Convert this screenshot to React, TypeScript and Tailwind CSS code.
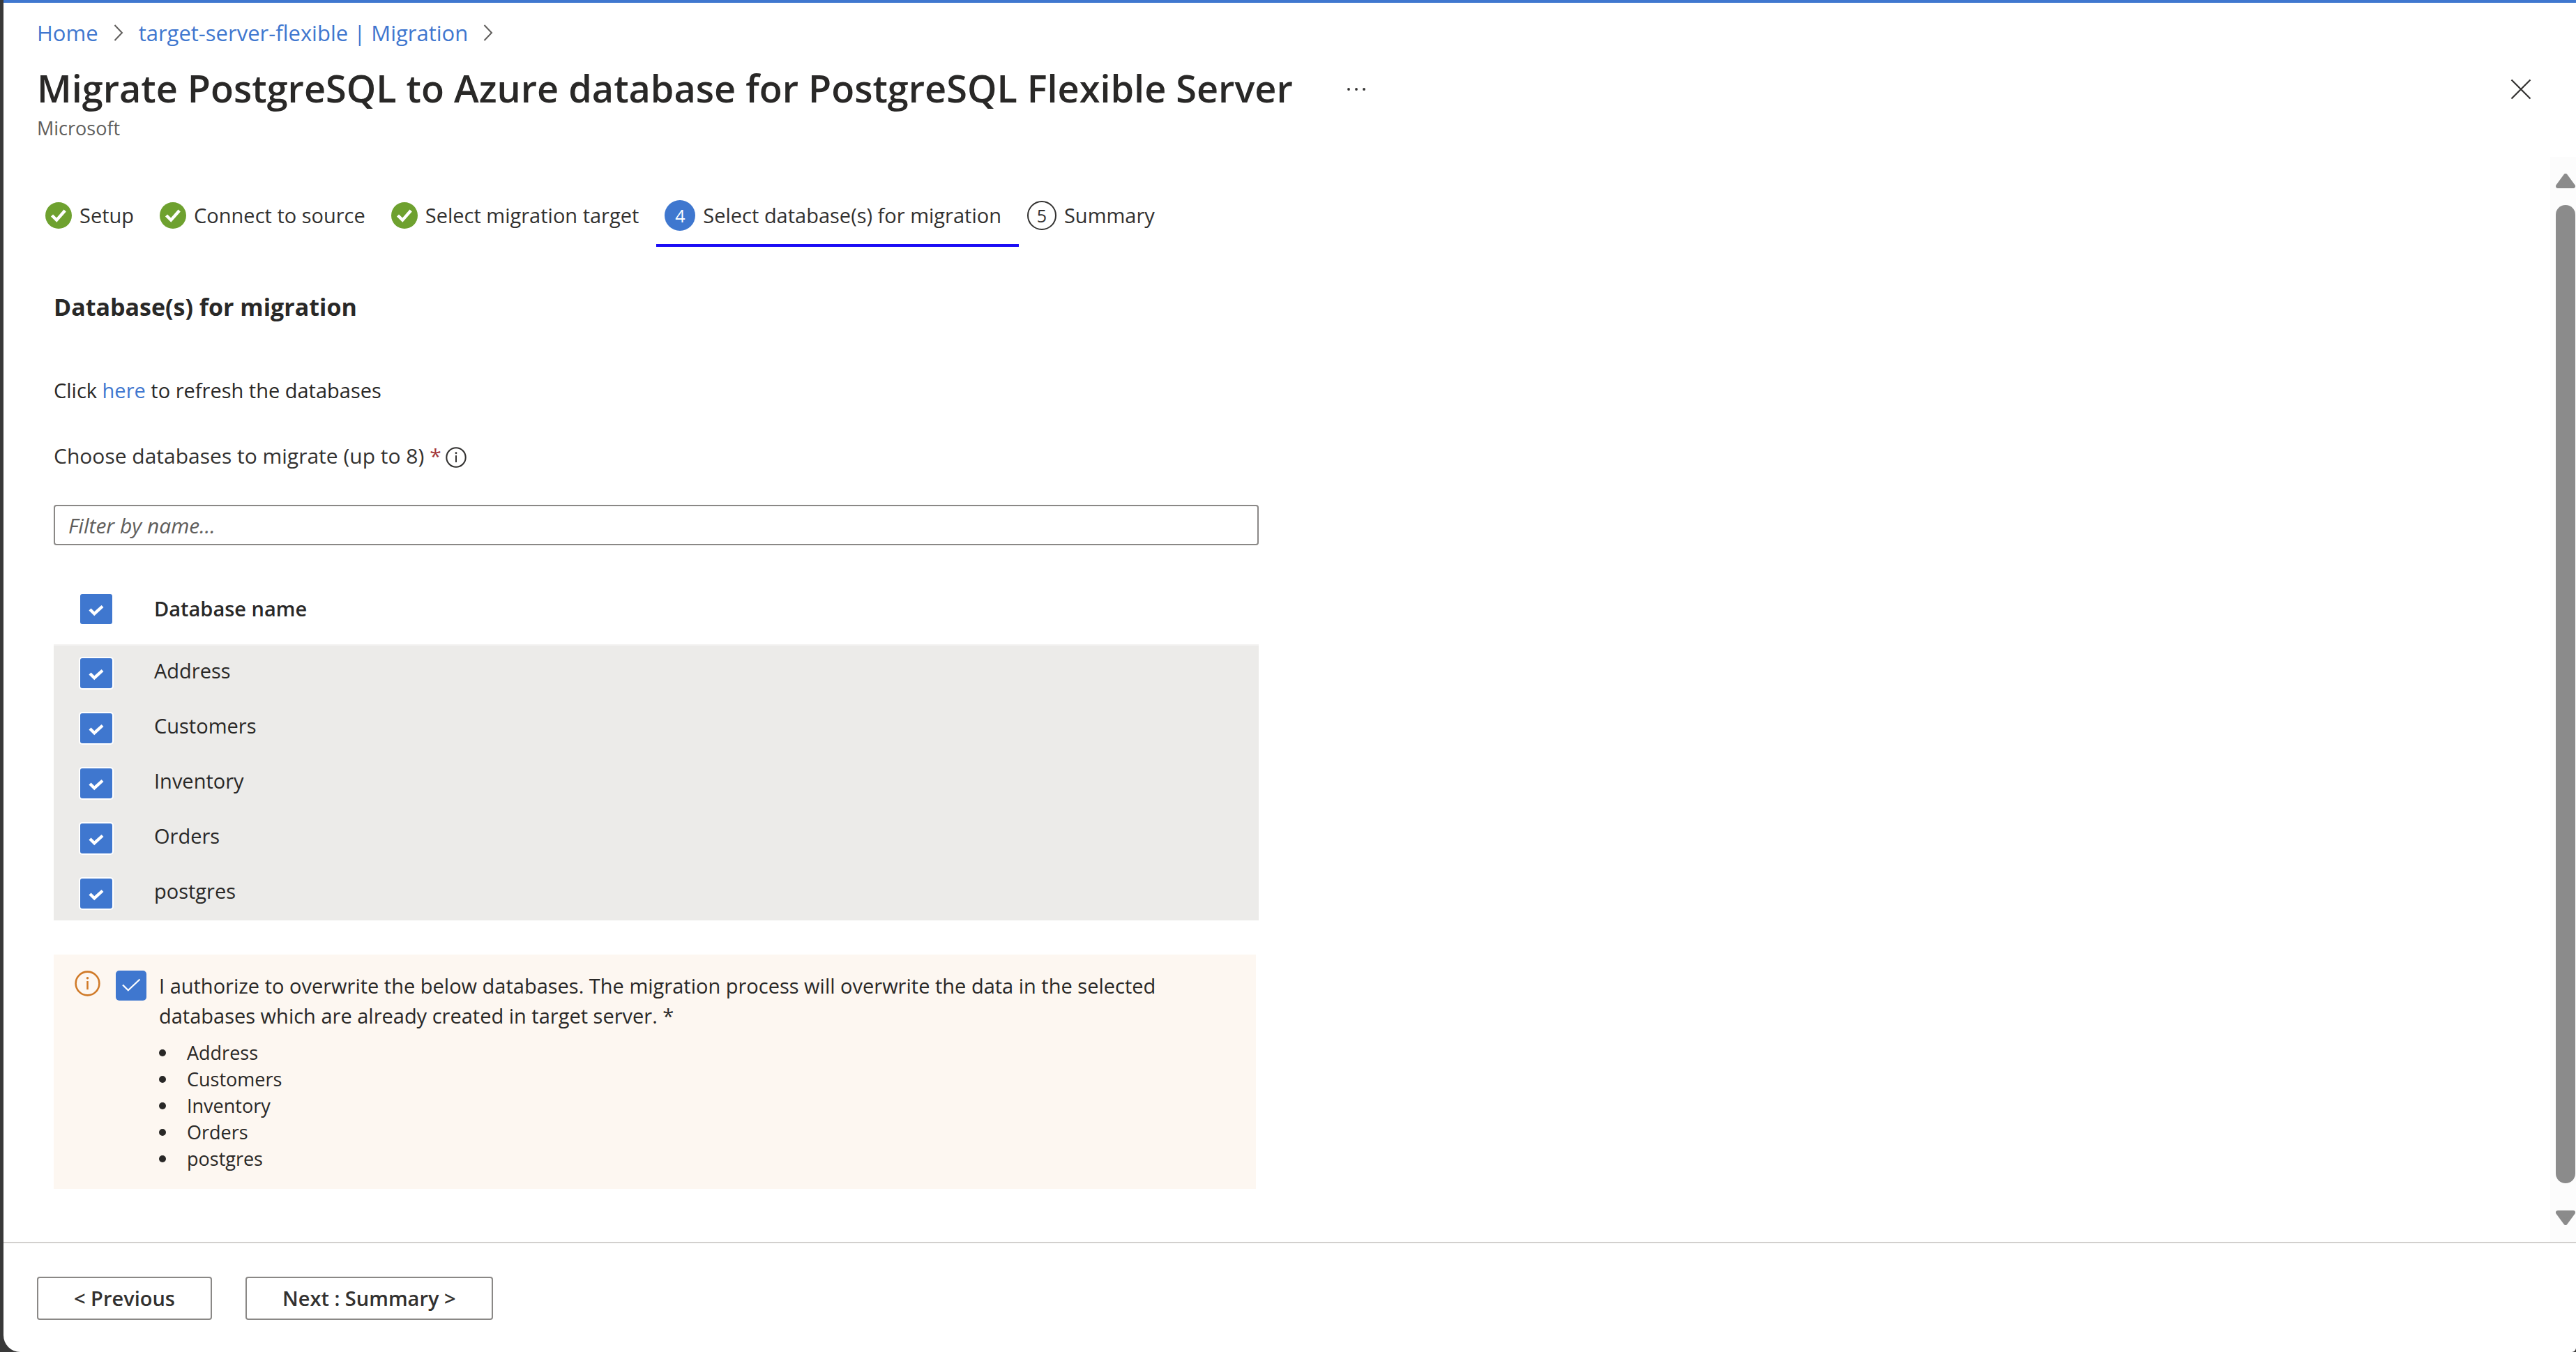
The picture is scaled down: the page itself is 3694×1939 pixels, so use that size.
import { useState } from "react";

const DATABASES = ["Address", "Customers", "Inventory", "Orders", "postgres"];

const STEPS = [
  { label: "Setup", state: "done" },
  { label: "Connect to source", state: "done" },
  { label: "Select migration target", state: "done" },
  { label: "Select database(s) for migration", state: "current" },
  { label: "Summary", state: "todo" },
];

function Chevron() {
  return (
    <svg aria-hidden="true" className="h-[26px] w-[14px]" viewBox="0 0 14 26" fill="none" stroke="#605e5c" strokeWidth="2">
      <path d="M1.5 2 L12 13 L1.5 24" />
    </svg>
  );
}

function StepIcon({ state, number }: { state: string; number: number }) {
  if (state === "done") {
    return (
      <svg aria-hidden="true" className="size-[38px]" viewBox="0 0 38 38" fill="none">
        <circle cx="19" cy="19" r="19" fill="#6ea12f" />
        <path d="M9.5 19 L16.2 25.6 L28.2 12" stroke="#fff" strokeWidth="4.4" />
      </svg>
    );
  }
  if (state === "current") {
    return (
      <span className="flex size-11 items-center justify-center rounded-full bg-[#3f77cf] text-[25px] leading-none text-white">
        {number}
      </span>
    );
  }
  return (
    <span className="flex size-[42px] items-center justify-center rounded-full border-2 border-[#323130] text-[25px] leading-none">
      {number}
    </span>
  );
}

type CheckProps = {
  id: string;
  label?: string;
  thin?: boolean;
  checked: boolean;
  onChange: (value: boolean) => void;
};

function Check({ id, label, thin, checked, onChange }: CheckProps) {
  return (
    <span className="inline-grid align-middle">
      <input
        id={id}
        type="checkbox"
        aria-label={label}
        checked={checked}
        onChange={(e) => onChange(e.target.checked)}
        className={
          thin
            ? "peer col-start-1 row-start-1 h-[43px] w-11 appearance-none rounded-[5px] border-2 border-[#323130] bg-white checked:border-[#3f77cf] checked:bg-[#3f77cf]"
            : "peer col-start-1 row-start-1 h-[43px] w-[46px] appearance-none rounded-[3px] border-2 border-[#323130] bg-white ring-2 ring-white checked:border-[#3f77cf] checked:bg-[#3f77cf]"
        }
      />
      <svg
        aria-hidden="true"
        className="pointer-events-none invisible col-start-1 row-start-1 h-[43px] w-[46px] peer-checked:visible"
        viewBox="0 0 46 43"
        fill="none"
        stroke="#fff"
      >
        {thin ? (
          <path d="M10 20.5 L17.8 28.3 L34.5 12.5" strokeWidth="2.2" />
        ) : (
          <path d="M14 22 L20.3 28.2 L32 17.5" strokeWidth="4.4" />
        )}
      </svg>
    </span>
  );
}

function Info({ className }: { className: string }) {
  return (
    <svg aria-hidden="true" className={className} viewBox="0 0 32 32" fill="none" stroke="currentColor" strokeWidth="2.2">
      <circle cx="16" cy="16" r="14.6" />
      <path d="M16 13 V23.5" />
      <circle cx="16" cy="9.3" r="1.5" fill="currentColor" stroke="none" />
    </svg>
  );
}

export default function App() {
  const [selected, setSelected] = useState<string[]>(DATABASES);
  const [authorized, setAuthorized] = useState(true);
  const [filter, setFilter] = useState("");

  const toggle = (name: string, on: boolean) =>
    setSelected(DATABASES.filter((d) => (d === name ? on : selected.includes(d))));
  const visible = DATABASES.filter((d) => d.toLowerCase().includes(filter.toLowerCase()));

  return (
    <div className="flex min-h-screen bg-[#393939] pl-[5px] font-['Open_Sans',sans-serif] text-[29px] leading-10 text-[#292827]">
      <div className="flex min-w-0 flex-1 flex-col rounded-br-[6px] rounded-bl-3xl border-t-4 border-[#3f77cf] bg-white">
        <header className="pt-[23px] pr-16 pb-[23px] pl-12">
          <nav aria-label="Breadcrumb" className="flex items-center gap-[22px] text-[31px] text-[#3f77cf]">
            <a href="#home">Home</a>
            <Chevron />
            <a href="#migration">target-server-flexible | Migration</a>
            <Chevron />
          </nav>
          <div className="mt-6 flex items-center">
            <h1 className="text-[54px] leading-[70px] font-semibold">
              Migrate PostgreSQL to Azure database for PostgreSQL Flexible Server
            </h1>
            <button type="button" aria-label="More actions" className="ml-[78px] pt-1">
              <svg className="h-7 w-[26px]" viewBox="0 0 26 28" fill="#323130">
                <circle cx="2" cy="14" r="1.9" />
                <circle cx="13" cy="14" r="1.9" />
                <circle cx="24" cy="14" r="1.9" />
              </svg>
            </button>
            <button type="button" aria-label="Close" className="ml-auto pt-1">
              <svg className="size-[30px]" viewBox="0 0 30 30" fill="none" stroke="#323130" strokeWidth="2.2">
                <path d="M1.5 1.5 L28.5 28.5 M28.5 1.5 L1.5 28.5" />
              </svg>
            </button>
          </div>
          <p className="mt-[5px] text-[27px] leading-9 text-[#605e5c]">Microsoft</p>
        </header>

        <div className="flex flex-1">
          <main className="min-w-0 flex-1 pt-[62px] pb-[72px] pl-12">
            <ol className="flex text-[#323130]">
              {STEPS.map((step, i) => (
                <li key={step.label}>
                  <button
                    type="button"
                    aria-current={step.state === "current" ? "step" : undefined}
                    className={
                      step.state === "current"
                        ? "border-b-4 border-[#1b0cf5] pr-[25px] pb-[19px] pl-3"
                        : "border-b-4 border-transparent pr-[25px] pb-[19px] pl-3"
                    }
                  >
                    <span className="flex h-11 items-center gap-[11px]">
                      <StepIcon state={step.state} number={i + 1} />
                      {step.label}
                    </span>
                  </button>
                </li>
              ))}
            </ol>

            <div className="max-w-[1752px] pl-6">
              <h2 className="mt-[63px] text-[34px] leading-[46px] font-bold">Database(s) for migration</h2>
              <p className="mt-[77px]">
                Click <a href="#refresh" className="text-[#3f77cf]">here</a> to refresh the databases
              </p>
              <div className="mt-[54px] flex items-center text-[30px] text-[#323130]">
                <label htmlFor="filter">
                  Choose databases to migrate (up to 8) <span className="text-[#a4373a]">*</span>
                </label>
                <button type="button" aria-label="More information" className="ml-1.5 pt-1">
                  <Info className="size-[30px]" />
                </button>
              </div>
              <input
                id="filter"
                type="text"
                value={filter}
                onChange={(e) => setFilter(e.target.value)}
                placeholder="Filter by name..."
                className="mt-[50px] block h-[58px] w-full rounded border-2 border-[#8a8886] px-[19px] text-[30px] placeholder:text-[#605e5c] placeholder:italic"
              />

              <table className="mt-10 w-full text-left">
                <thead>
                  <tr className="h-[103px]">
                    <th className="w-36 pl-[38px]">
                      <Check
                        id="all"
                        label="Select all databases"
                        checked={selected.length === DATABASES.length}
                        onChange={(on) => setSelected(on ? DATABASES : [])}
                      />
                    </th>
                    <th className="font-semibold">Database name</th>
                  </tr>
                </thead>
                <tbody className="border-t-2 border-[#f3f2f1] bg-[#ecebe9]">
                  {visible.map((name) => (
                    <tr key={name} className="h-[79px]">
                      <td className="pl-[38px]">
                        <Check
                          id={"db-" + name}
                          checked={selected.includes(name)}
                          onChange={(on) => toggle(name, on)}
                        />
                      </td>
                      <td className="pb-1.5">
                        <label htmlFor={"db-" + name}>{name}</label>
                      </td>
                    </tr>
                  ))}
                </tbody>
              </table>

              <section className="mt-[49px] mr-1 flex items-start bg-[#fdf7f1] pt-[23px] pr-16 pb-6 pl-[30px]">
                <Info className="size-[37px] shrink-0 text-[#d07a28]" />
                <span className="ml-[22px] shrink-0 leading-none">
                  <Check id="authorize" thin checked={authorized} onChange={setAuthorized} />
                </span>
                <div className="ml-4">
                  <label htmlFor="authorize" className="block leading-[43px]">
                    I authorize to overwrite the below databases. The migration process will overwrite the data in the
                    selected databases which are already created in target server. *
                  </label>
                  <ul className="mt-[13px] text-[27px] leading-[38px]">
                    {selected.map((name) => (
                      <li key={name} className="flex items-center gap-[30px]">
                        <span aria-hidden="true" className="size-2.5 rounded-full bg-[#292827]" />
                        {name}
                      </li>
                    ))}
                  </ul>
                </div>
              </section>
            </div>
          </main>

          <div aria-hidden="true" className="flex w-[37px] flex-col items-center bg-[#fcfcfc] py-6 pr-px pl-2 text-[#8b8b8b]">
            <svg className="h-[21px] w-7" viewBox="0 0 28 21" fill="currentColor" stroke="currentColor" strokeWidth="6" strokeLinejoin="round">
              <path d="M14 3 L25 18 H3 Z" />
            </svg>
            <div className="mt-6 mb-[39px] w-7 flex-1 rounded-full bg-[#8b8b8b]" />
            <svg className="h-[21px] w-7" viewBox="0 0 28 21" fill="currentColor" stroke="currentColor" strokeWidth="6" strokeLinejoin="round">
              <path d="M14 18 L3 3 H25 Z" />
            </svg>
          </div>
        </div>

        <footer className="flex gap-12 border-t-2 border-[#d2d0ce] px-12 pt-12 pb-[46px] text-[#323130]">
          <button type="button" className="h-[62px] rounded border-2 border-[#8a8886] px-[51px] font-semibold">
            &lt; Previous
          </button>
          <button type="button" className="h-[62px] rounded border-2 border-[#8a8886] px-[51px] font-semibold">
            Next : Summary &gt;
          </button>
        </footer>
      </div>
    </div>
  );
}
